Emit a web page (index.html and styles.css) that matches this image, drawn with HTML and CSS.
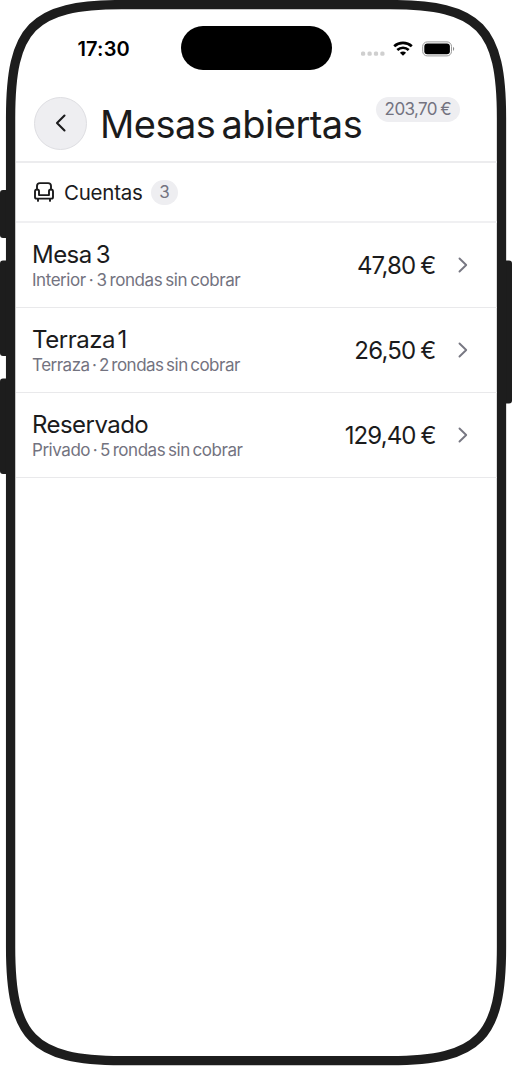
FILE: index.html
```html
<!DOCTYPE html>
<html lang="es">
<head>
<meta charset="utf-8">
<title>Mesas abiertas</title>
<link rel="stylesheet" href="styles.css">
</head>
<body>
<div class="phone">
  <svg class="frame" viewBox="0 0 512 1066" aria-hidden="true">
    <g fill="#1d1d1d">
      <rect x="0" y="190" width="12" height="48" rx="3"/>
      <rect x="0" y="260.500" width="12" height="95.500" rx="3"/>
      <rect x="0" y="378.500" width="12" height="95.500" rx="3"/>
      <rect x="500" y="260.500" width="12" height="143" rx="3"/>
    </g>
    <path d="M122 4.600H390C480 4.600 501.500 28 501.500 118V947C501.500 1037 480 1060.700 390 1060.700H122C32 1060.700 10.600 1037 10.600 947V118C10.600 28 32 4.600 122 4.600Z" fill="#fff" stroke="#1d1d1d" stroke-width="9.300"/>
  </svg>
  <main class="screen">
    <div class="status">
      <span class="time">17:30</span>
      <span class="island"></span>
      <div class="indicators">
        <svg width="24" height="5" viewBox="0 0 24 5" fill="#cfcfcf"><rect x="0" y=".5" width="4.200" height="4.200" rx="1.500"/><rect x="6.500" y=".5" width="4.200" height="4.200" rx="1.500"/><rect x="12.900" y=".5" width="4.200" height="4.200" rx="1.500"/><rect x="19.300" y=".5" width="4.200" height="4.200" rx="1.500"/></svg>
        <svg class="wifi" width="20" height="15" viewBox="0 0 20 15" fill="none" stroke="#000" stroke-width="2.700"><path d="M1.200 5.300C6.200.8 13.800.8 18.800 5.300M4.300 8.900c3.300-2.900 8.100-2.900 11.400 0"/><path d="M10 14.700 6.900 11.700c1.700-1.500 4.500-1.500 6.200 0Z" fill="#000" stroke="none"/></svg>
        <svg class="battery" width="33" height="16" viewBox="0 0 33 16"><rect x=".7" y=".9" width="28.800" height="14" rx="4.500" fill="none" stroke="#999"/><rect x="2.300" y="2.500" width="25.600" height="10.800" rx="3"/><path d="M31 5.800c1.600.8 1.600 3.400 0 4.200Z" fill="#888"/></svg>
      </div>
    </div>
    <header class="header">
      <button class="back" aria-label="Volver"><svg width="12" height="18" viewBox="0 0 12 18"><path d="m9.500 1.500-7.500 7.500 7.500 7.500"/></svg></button>
      <h1 class="title">Mesas abiertas</h1>
      <span class="total">203,70 €</span>
    </header>
    <section class="section">
      <svg class="sofa" width="20" height="20" viewBox="0 0 20 20"><path d="M3 7.200V4Q3 1.100 5.900 1.100h8.200q2.900 0 2.900 2.900v3.200M5 13.100V9.100Q5 7.500 3 7.500 1 7.500 1 9.500v5.400q0 1.700 1.700 1.700h14.600q1.700 0 1.700-1.700V9.500q0-2-2-2t-2 1.600v4Zm-1 3.500v2.300m12-2.300v2.300"/></svg>
      <span class="section-name">Cuentas</span>
      <span class="count">3</span>
    </section>
    <ul class="list">
      <li class="row"><div class="info"><span class="name n1">Mesa 3</span><span class="detail d1">Interior · 3 rondas sin cobrar</span></div><span class="price p1">47,80 €</span><svg class="chevron" viewBox="0 0 10 16"><path d="m1.500 1.500 6.700 6.500-6.700 6.500"/></svg></li>
      <li class="row"><div class="info"><span class="name n2">Terraza 1</span><span class="detail d2">Terraza · 2 rondas sin cobrar</span></div><span class="price p2">26,50 €</span><svg class="chevron" viewBox="0 0 10 16"><path d="m1.500 1.500 6.700 6.500-6.700 6.500"/></svg></li>
      <li class="row"><div class="info"><span class="name n3">Reservado</span><span class="detail d3">Privado · 5 rondas sin cobrar</span></div><span class="price p3">129,40 €</span><svg class="chevron" viewBox="0 0 10 16"><path d="m1.500 1.500 6.700 6.500-6.700 6.500"/></svg></li>
    </ul>
  </main>
</div>
</body>
</html>
```
FILE: styles.css
```css
* { box-sizing: border-box; }
body { margin: 0; background: #fff; color: #1b1b1c; font-family: Inter, "Liberation Sans", sans-serif; font-weight: 400; }
.phone { position: relative; width: 512px; height: 1066px; overflow: hidden; }
.frame { position: absolute; inset: 0; width: 512px; height: 1066px; }
.screen { position: relative; padding: 9px 15.5px; }
.status { display: grid; grid-template-columns: 165px 151px 165px; height: 76px; padding-top: 17px; align-items: start; }
.time { padding: 10px 0 0 62px; font-size: 20px; line-height: 26px; font-weight: 600; color: #000; letter-spacing: .15px; }
.island { height: 44px; border-radius: 22px; background: #000; }
.indicators { display: flex; padding: 14.500px 0 0 29.300px; }
.indicators svg { flex: none; }
.indicators svg:first-child { margin-top: 10.500px; }
.wifi { margin: 0 0 0 8px; }
.battery { margin: 0 0 0 9px; }
.header { display: flex; height: 78px; padding: 11.500px 18.500px 0; border-bottom: 2px solid #ececee; align-items: flex-start; }
.back { flex: none; display: grid; place-items: center; width: 53px; height: 53px; padding: 0; border: 1px solid #dedee2; border-radius: 50%; background: #eeeef1; }
.back svg, .sofa, .chevron { fill: none; stroke: #1b1b1c; stroke-width: 2.100; stroke-linecap: round; stroke-linejoin: round; }
.title { margin: 2px 0 0 13px; width: 263px; font-size: 38px; line-height: 50px; font-weight: 400; letter-spacing: -.52px; word-spacing: -4px; white-space: nowrap; }
.total { margin-left: 12.500px; width: 84.500px; height: 25px; border-radius: 13px; background: #eeeef1; color: #737380; font-size: 17px; line-height: 25px; text-align: center; letter-spacing: -.6px; word-spacing: -1px; white-space: nowrap; }
.section { display: flex; align-items: center; height: 60px; padding: 0 18.500px; border-bottom: 2px solid #f0f0f2; }
.sofa { flex: none; stroke-width: 1.900; }
.section-name { width: 79px; margin-left: 10px; font-size: 20.500px; letter-spacing: -.25px; }
.count { width: 27px; height: 25px; margin-left: 8px; border-radius: 13px; background: #eeeef1; color: #737380; font-size: 17px; line-height: 25px; text-align: center; }
.list { list-style: none; margin: 0; padding: 0; }
.row { display: flex; align-items: center; height: 85px; padding: 0 29px 0 16.500px; border-bottom: 1px solid #e9e9eb; }
.info { display: flex; flex-direction: column; flex: 1; white-space: nowrap; padding-top: 2px; }
.name { font-size: 24px; line-height: 28px; letter-spacing: -.55px; word-spacing: -2px; }
.n2 { letter-spacing: -.45px; word-spacing: -4px; }
.detail { font-size: 17px; line-height: 22px; color: #737380; letter-spacing: -.45px; word-spacing: -1.200px; }
.d2 { letter-spacing: -.5px; word-spacing: -1.800px; }
.d3 { word-spacing: -1.600px; }
.price { font-size: 24px; letter-spacing: -.8px; word-spacing: -1px; white-space: nowrap; }
.p3 { letter-spacing: -.9px; }
.chevron { width: 10px; height: 16px; margin-left: 22px; stroke: #777782; stroke-width: 1.900; }
```
